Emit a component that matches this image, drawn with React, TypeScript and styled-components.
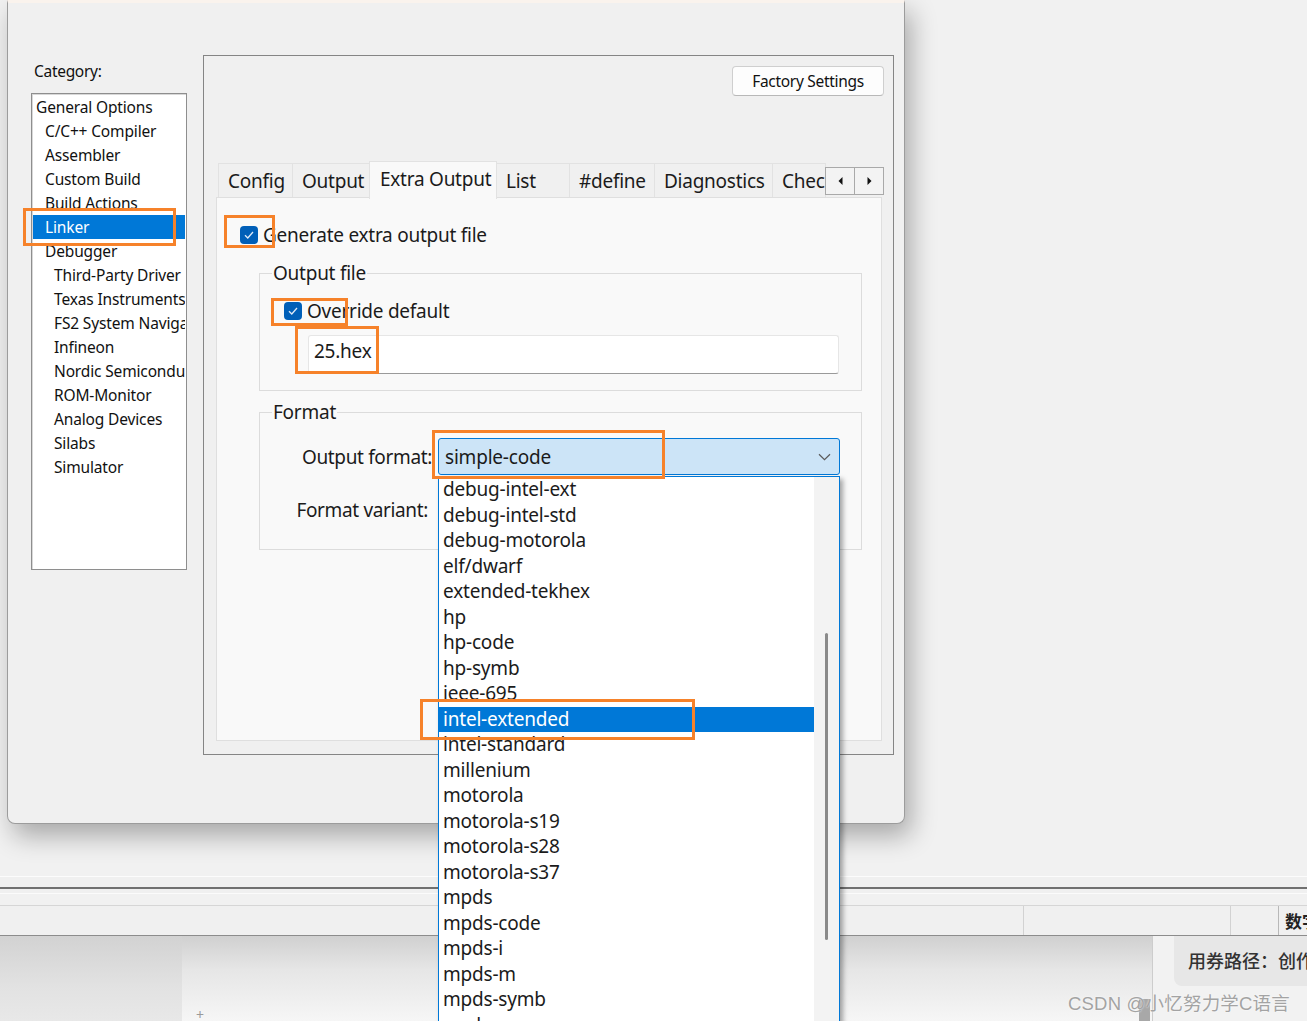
import React from "react";
import styled, { createGlobalStyle } from "styled-components";

const UI = `"Segoe UI", "Noto Sans", "Open Sans", "Noto Sans CJK SC", sans-serif`;

const GlobalStyle = createGlobalStyle`
  html, body { margin: 0; padding: 0; background: #f2f2f2; }
  body { font-family: ${UI}; color: #1b1b1b; }
  * { box-sizing: border-box; }
  fieldset { min-inline-size: 0; }
`;

const Page = styled.div`
  position: relative;
  width: 1307px;
  height: 1021px;
  overflow: hidden;
  display: flex;
  flex-direction: column;
  background: #f2f2f2;
`;

/* ---------- dialog ---------- */
const DialogZone = styled.div`
  flex: none;
  height: 876px;
  padding-left: 7px;
  background: #f1f1f1;
`;

const Dialog = styled.div`
  position: relative;
  z-index: 1;
  width: 898px;
  height: 824px;
  background: #f0f0f0;
  border: 1px solid #9c9c9c;
  border-top: 3px solid #faf3ed;
  border-radius: 0 0 8px 8px;
  box-shadow: 6px 12px 26px rgba(0, 0, 0, 0.3);
  display: grid;
  grid-template-columns: 156px 691px;
  column-gap: 16px;
  align-items: start;
  padding: 52px 0 0 23px;
`;

const LeftCol = styled.div`
  display: flex;
  flex-direction: column;
`;

const CategoryLabel = styled.div`
  font-size: 15.5px;
  line-height: 20px;
  letter-spacing: -0.3px;
  margin: 6px 0 12px 3px;
  color: #111;
`;

const TreeBox = styled.div`
  height: 477px;
  background: #fff;
  border: 1px solid #8e8e8e;
  box-shadow: inset 1px 1px 0 #d8d8d8;
  padding-top: 1px;
  overflow: hidden;
`;

const TreeItem = styled.div<{ $level: number; $selected?: boolean }>`
  height: 24px;
  line-height: 24px;
  font-size: 15.5px;
  letter-spacing: -0.15px;
  white-space: nowrap;
  overflow: hidden;
  margin: 0 1px;
  padding-left: ${(p) => 3 + p.$level * 9}px;
  color: ${(p) => (p.$selected ? "#fff" : "#111")};
  background: ${(p) => (p.$selected ? "#0078d7" : "transparent")};
`;

const Frame = styled.div`
  height: 700px;
  border: 1px solid #858585;
  background: #f0f0f0;
  padding: 10px 9px 0 12px;
  display: flex;
  flex-direction: column;
`;

const ButtonRow = styled.div`
  display: flex;
  justify-content: flex-end;
`;

const FactoryButton = styled.div`
  width: 152px;
  height: 30px;
  background: #fdfdfd;
  border: 1px solid #cfcfcf;
  border-bottom-color: #b8b8b8;
  border-radius: 4px;
  font-size: 15.5px;
  letter-spacing: -0.3px;
  display: flex;
  align-items: center;
  justify-content: center;
  color: #111;
`;

const TabBar = styled.div`
  position: relative;
  z-index: 2;
  display: flex;
  align-items: flex-end;
  height: 38px;
  margin-top: 65px;
  margin-bottom: -2px;
  padding-left: 2px;
`;

const Tab = styled.div<{ $w: number; $active?: boolean }>`
  flex: none;
  width: ${(p) => p.$w + 1}px;
  height: ${(p) => (p.$active ? 38 : 34)}px;
  margin-bottom: ${(p) => (p.$active ? 0 : 2)}px;
  margin-right: -1px;
  padding: 1px 0 0 ${(p) => (p.$active ? 10 : 9)}px;
  line-height: ${(p) => (p.$active ? 33 : 32)}px;
  font-size: 19px;
  letter-spacing: -0.25px;
  white-space: nowrap;
  overflow: hidden;
  color: #1b1b1b;
  background: ${(p) => (p.$active ? "#f9f9f9" : "#f0f0f0")};
  border: 1px solid #e2e2e2;
  border-bottom: none;
`;

const TabScroll = styled.div`
  flex: none;
  display: flex;
  height: 28px;
  margin-bottom: 4px;
`;

const ArrowButton = styled.div`
  width: 30px;
  height: 28px;
  margin-right: -1px;
  border: 1px solid #a9a9a9;
  background: #f3f3f3;
  display: flex;
  align-items: center;
  justify-content: center;
`;

const TabContent = styled.div`
  width: 666px;
  height: 544px;
  background: #f9f9f9;
  border: 1px solid #dfdfdf;
  display: flex;
  flex-direction: column;
`;

const CheckRow = styled.div<{ $mt: number; $ml: number }>`
  display: flex;
  align-items: center;
  gap: 5px;
  height: 18px;
  margin: ${(p) => p.$mt}px 0 0 ${(p) => p.$ml}px;
  font-size: 19px;
  letter-spacing: -0.25px;
  white-space: nowrap;
`;

const CheckBoxBox = styled.span`
  flex: none;
  width: 18px;
  height: 18px;
  border-radius: 4px;
  background: #005fb8;
  display: flex;
  align-items: center;
  justify-content: center;
`;

const Group = styled.fieldset<{ $mt: number }>`
  margin: ${(p) => p.$mt}px 19px 0 42px;
  padding: 0;
  border: 1px solid #dcdcdc;
`;

const Legend = styled.legend`
  margin-left: 12px;
  padding: 0 1px;
  font-size: 19px;
  line-height: 24px;
  letter-spacing: -0.25px;
`;

const TextInput = styled.div`
  width: 531px;
  height: 39px;
  margin: 15px 0 16px 48px;
  background: #fff;
  border: 1px solid #e6e6e6;
  border-bottom: 1px solid #9a9a9a;
  border-radius: 3px;
  padding: 0 0 8px 5px;
  display: flex;
  align-items: center;
  font-size: 19px;
  letter-spacing: -0.25px;
`;

const FormatGrid = styled.div`
  display: grid;
  grid-template-columns: 172px 402px;
  grid-auto-rows: 37px;
  column-gap: 6px;
  row-gap: 16px;
  margin-top: 14px;
  padding-bottom: 21px;
`;

const FieldLabel = styled.div<{ $pr?: number }>`
  align-self: center;
  text-align: right;
  padding-right: ${(p) => p.$pr ?? 0}px;
  font-size: 19px;
  letter-spacing: -0.35px;
  white-space: nowrap;
`;

const Combo = styled.div<{ $open?: boolean }>`
  display: flex;
  align-items: center;
  justify-content: space-between;
  padding: 0 8px 0 6px;
  font-size: 19px;
  letter-spacing: -0.2px;
  background: ${(p) => (p.$open ? "#cce4f7" : "#fff")};
  border: 1px solid ${(p) => (p.$open ? "#0078d7" : "#d0d0d0")};
  border-radius: 3px;
`;

/* ---------- dropdown list ---------- */
const DropList = styled.div`
  position: absolute;
  z-index: 5;
  left: 438px;
  top: 476px;
  width: 402px;
  height: 560px;
  background: #fff;
  border-left: 1px solid #0078d7;
  border-right: 1px solid #0078d7;
  border-top: 1px solid #0078d7;
  box-shadow: 3px 3px 5px rgba(0, 0, 0, 0.35);
  display: flex;
`;

const ListColumn = styled.div`
  flex: 1;
  display: flex;
  flex-direction: column;
`;

const ListItem = styled.div<{ $selected?: boolean }>`
  flex: none;
  height: 25.5px;
  line-height: 25.5px;
  padding-left: 4px;
  font-size: 19px;
  letter-spacing: -0.2px;
  white-space: nowrap;
  color: ${(p) => (p.$selected ? "#fff" : "#1b1b1b")};
  background: ${(p) => (p.$selected ? "#0078d7" : "transparent")};
`;

const ScrollTrack = styled.div`
  flex: none;
  width: 25px;
  background: #f3f3f3;
  padding: 156px 0 0 11px;
`;

const ScrollThumb = styled.div`
  width: 3px;
  height: 307px;
  border-radius: 2px;
  background: #8a8a8a;
`;

/* ---------- annotation marks ---------- */
const Mark = styled.div<{ $x: number; $y: number; $w: number; $h: number }>`
  position: absolute;
  z-index: 10;
  left: ${(p) => p.$x}px;
  top: ${(p) => p.$y}px;
  width: ${(p) => p.$w}px;
  height: ${(p) => p.$h}px;
  border: 3px solid #f6822a;
`;

/* ---------- app chrome below the dialog ---------- */
const AppChrome = styled.div`
  flex: none;
  display: flex;
  flex-direction: column;
  background: #f0f0f0;
`;

const Rule = styled.div<{ $h: number; $c: string }>`
  height: ${(p) => p.$h}px;
  background: ${(p) => p.$c};
`;

const StatusBar = styled.div`
  height: 30px;
  display: flex;
  background: #f0f0f0;
  border-top: 1px solid #d6d6d6;
`;

const StatusCell = styled.div<{ $w?: number; $sep?: string }>`
  flex: ${(p) => (p.$w ? "none" : "1")};
  width: ${(p) => (p.$w ? `${p.$w}px` : "auto")};
  border-left: ${(p) => (p.$sep ? `1px solid ${p.$sep}` : "none")};
  padding-left: 6px;
  display: flex;
  align-items: center;
  font-size: 17px;
  font-weight: 700;
  white-space: nowrap;
  overflow: hidden;
  color: #222;
`;

const BottomArea = styled.div`
  flex: 1;
  display: flex;
`;

const LeftDock = styled.div`
  width: 182px;
  background: linear-gradient(180deg, #d2d2d2 0%, #e2e2e2 60%, #e8e8e8 100%);
`;

const Workspace = styled.div`
  flex: 1;
  display: flex;
  align-items: flex-end;
  justify-content: space-between;
  padding-left: 14px;
  background: linear-gradient(180deg, #d0d0d0 0%, #e6e6e6 40%, #f6f6f6 100%);
`;

const PlusGlyph = styled.span`
  font-size: 14px;
  line-height: 12px;
  color: #9a9a9a;
`;

const MiniBar = styled.div`
  width: 11px;
  height: 22px;
  background: #a8a8a8;
  margin-right: 2px;
`;

const SidePanel = styled.div`
  width: 155px;
  border-left: 1px solid #cdcdcd;
  background: #f2f2f2;
  padding-left: 21px;
`;

const CouponBox = styled.div`
  height: 50px;
  border-radius: 0 0 0 8px;
  background: #e7e7e7;
  padding: 0 0 3px 14px;
  display: flex;
  align-items: center;
  font-size: 18px;
  font-weight: 500;
  white-space: nowrap;
  overflow: hidden;
  color: #333;
  font-family: "Noto Sans CJK SC", sans-serif;
`;

const Watermark = styled.div`
  position: absolute;
  z-index: 11;
  left: 1068px;
  top: 989px;
  font-family: "Liberation Sans", "Noto Sans CJK SC", sans-serif;
  font-size: 18.5px;
  letter-spacing: 0.2px;
  color: #a3a3a3;
  text-shadow: 0 0 2px #ffffff;
  white-space: nowrap;
`;

/* ---------- icons ---------- */
const Check = () => (
  <svg width="12" height="10" viewBox="0 0 12 10">
    <path d="M2 5.2 L4.8 8 L10 2" fill="none" stroke="#dfeaf7" strokeWidth="1.3" />
  </svg>
);

const Chevron = () => (
  <svg width="13" height="8" viewBox="0 0 13 8">
    <path d="M1 1.2 L6.5 6.6 L12 1.2" fill="none" stroke="#5a5a5a" strokeWidth="1.2" />
  </svg>
);

const Tri = ({ dir }: { dir: "l" | "r" }) => (
  <svg width="5" height="8" viewBox="0 0 5 8">
    {dir === "l" ? <polygon points="4.5,0 4.5,8 0.5,4" fill="#111" /> : <polygon points="0.5,0 0.5,8 4.5,4" fill="#111" />}
  </svg>
);

const tree: [string, number, boolean?][] = [
  ["General Options", 0],
  ["C/C++ Compiler", 1],
  ["Assembler", 1],
  ["Custom Build", 1],
  ["Build Actions", 1],
  ["Linker", 1, true],
  ["Debugger", 1],
  ["Third-Party Driver", 2],
  ["Texas Instruments", 2],
  ["FS2 System Navigator", 2],
  ["Infineon", 2],
  ["Nordic Semiconductor", 2],
  ["ROM-Monitor", 2],
  ["Analog Devices", 2],
  ["Silabs", 2],
  ["Simulator", 2],
];

const tabs: [string, number, boolean?][] = [
  ["Config", 74],
  ["Output", 77],
  ["Extra Output", 127, true],
  ["List", 73],
  ["#define", 85],
  ["Diagnostics", 118],
  ["Checksum", 53],
];

const formats = [
  "debug-intel-ext",
  "debug-intel-std",
  "debug-motorola",
  "elf/dwarf",
  "extended-tekhex",
  "hp",
  "hp-code",
  "hp-symb",
  "ieee-695",
  "intel-extended",
  "intel-standard",
  "millenium",
  "motorola",
  "motorola-s19",
  "motorola-s28",
  "motorola-s37",
  "mpds",
  "mpds-code",
  "mpds-i",
  "mpds-m",
  "mpds-symb",
  "msd",
  "msp430-txt",
];

const marks = [
  { x: 23, y: 208, w: 153, h: 38 },
  { x: 224, y: 215, w: 51, h: 33 },
  { x: 271, y: 298, w: 77, h: 28 },
  { x: 295, y: 326, w: 84, h: 48 },
  { x: 432, y: 430, w: 233, h: 49 },
  { x: 420, y: 699, w: 275, h: 41 },
];

export default function App() {
  return (
    <>
      <GlobalStyle />
      <Page>
        <DialogZone>
          <Dialog>
            <LeftCol>
              <CategoryLabel>Category:</CategoryLabel>
              <TreeBox>
                {tree.map(([label, level, sel]) => (
                  <TreeItem key={label} $level={level} $selected={sel}>
                    {label}
                  </TreeItem>
                ))}
              </TreeBox>
            </LeftCol>
            <Frame>
              <ButtonRow>
                <FactoryButton>Factory Settings</FactoryButton>
              </ButtonRow>
              <TabBar>
                {tabs.map(([label, w, active]) => (
                  <Tab key={label} $w={w} $active={active}>
                    {label}
                  </Tab>
                ))}
                <TabScroll>
                  <ArrowButton>
                    <Tri dir="l" />
                  </ArrowButton>
                  <ArrowButton>
                    <Tri dir="r" />
                  </ArrowButton>
                </TabScroll>
              </TabBar>
              <TabContent>
                <CheckRow $mt={28} $ml={23}>
                  <CheckBoxBox>
                    <Check />
                  </CheckBoxBox>
                  Generate extra output file
                </CheckRow>
                <Group $mt={17}>
                  <Legend>Output file</Legend>
                  <CheckRow $mt={17} $ml={24}>
                    <CheckBoxBox>
                      <Check />
                    </CheckBoxBox>
                    Override default
                  </CheckRow>
                  <TextInput>25.hex</TextInput>
                </Group>
                <Group $mt={9}>
                  <Legend>Format</Legend>
                  <FormatGrid>
                    <FieldLabel>Output format:</FieldLabel>
                    <Combo $open>
                      <span>simple-code</span>
                      <Chevron />
                    </Combo>
                    <FieldLabel $pr={4}>Format variant:</FieldLabel>
                    <Combo>
                      <span />
                      <Chevron />
                    </Combo>
                  </FormatGrid>
                </Group>
              </TabContent>
            </Frame>
          </Dialog>
        </DialogZone>

        <AppChrome>
          <Rule $h={1} $c="#fcfcfc" />
          <Rule $h={10} $c="#f0f0f0" />
          <Rule $h={2} $c="#707070" />
          <Rule $h={4} $c="#f0f0f0" />
          <Rule $h={1} $c="#fbfbfb" />
          <Rule $h={11} $c="#f1f1f1" />
          <StatusBar>
            <StatusCell $w={1023} />
            <StatusCell $w={207} $sep="#d2d2d2" />
            <StatusCell $w={48} $sep="#d2d2d2" />
            <StatusCell $sep="#b8b8b8">数字</StatusCell>
          </StatusBar>
          <Rule $h={1} $c="#8c8c8c" />
        </AppChrome>

        <BottomArea>
          <LeftDock />
          <Workspace>
            <PlusGlyph>+</PlusGlyph>
            <MiniBar />
          </Workspace>
          <SidePanel>
            <CouponBox>用券路径：创作</CouponBox>
          </SidePanel>
        </BottomArea>

        <DropList>
          <ListColumn>
            {formats.map((f) => (
              <ListItem key={f} $selected={f === "intel-extended"}>
                {f}
              </ListItem>
            ))}
          </ListColumn>
          <ScrollTrack>
            <ScrollThumb />
          </ScrollTrack>
        </DropList>

        {marks.map((m, i) => (
          <Mark key={i} $x={m.x} $y={m.y} $w={m.w} $h={m.h} />
        ))}

        <Watermark>CSDN @小忆努力学C语言</Watermark>
      </Page>
    </>
  );
}
